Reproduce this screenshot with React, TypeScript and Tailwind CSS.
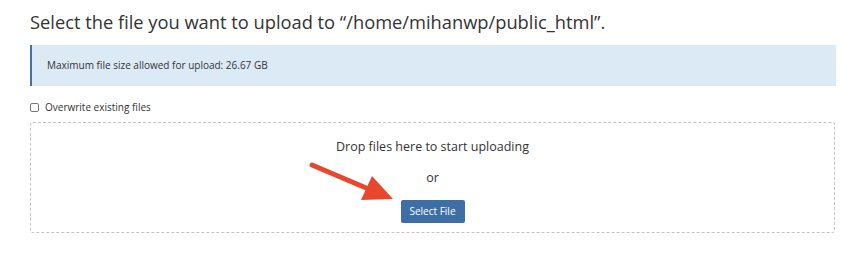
import React from 'react';

function Arrow() {
  return (
    <svg className="absolute left-[-92px] top-[-35px]" width="100" height="50" viewBox="0 0 100 50">
      {/* shaft */}
      <line x1="3" y1="3" x2="62" y2="28" stroke="#e9472d" strokeWidth="5" strokeLinecap="round" />
      {/* head */}
      <polygon points="52,38 84,37 63,14" fill="#e9472d" />
    </svg>
  );
}

export default function App() {
  return (
    <div className="w-[860px] h-[276px] bg-white px-[30px] pt-[10px] font-['Open_Sans',sans-serif] text-[#333]">
      <h1 className="text-[18.3px] leading-[24px] text-[#333]">
        Select the file you want to upload to “/home/mihanwp/public_html”.
      </h1>

      <div className="mt-[11px] h-[41px] w-[806px] flex items-center bg-[#dceaf6] border-l-2 border-[#4a6f9c] pl-[15px] text-[10px] text-[#333]">
        Maximum file size allowed for upload: 26.67 GB
      </div>

      <label className="mt-[14px] flex items-center gap-[6px] text-[10px] text-[#333]">
        <span className="w-[9px] h-[9px] border border-[#777] rounded-[2px] bg-white" />
        Overwrite existing files
      </label>

      <div className="mt-[7px] w-[805px] h-[111px] border border-dashed border-[#c4c4c4] rounded-[3px] flex flex-col items-center pt-[15px]">
        <p className="text-[12.5px] leading-[18px] text-[#333]">Drop files here to start uploading</p>
        <p className="mt-[13px] text-[12.5px] leading-[18px] text-[#333]">or</p>
        <div className="relative mt-[10px]">
          <Arrow />
          <button className="w-[64px] h-[23px] bg-[#3d6fa6] rounded-[2px] text-white text-[10px]">
            Select File
          </button>
        </div>
      </div>
    </div>
  );
}
